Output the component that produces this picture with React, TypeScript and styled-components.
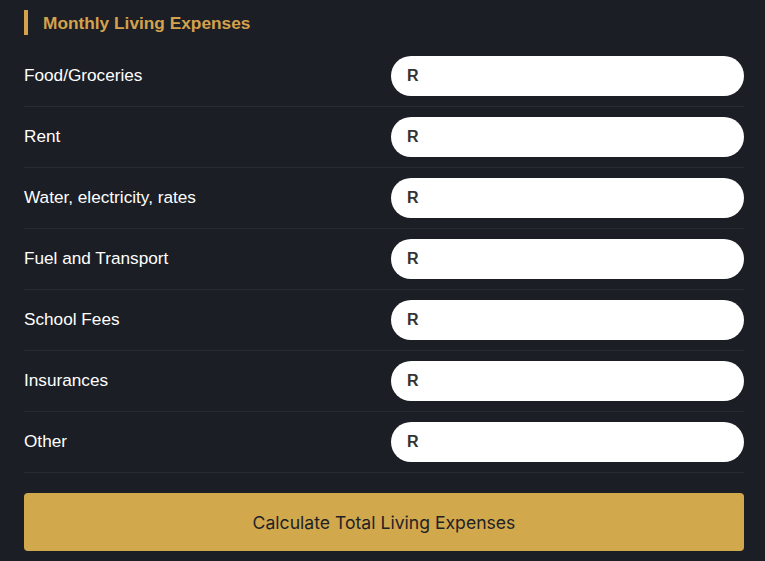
import styled, {createGlobalStyle} from 'styled-components'

const GlobalStyle = createGlobalStyle`
  html, body {
    margin: 0;
    padding: 0;
    background: #1b1e25;
  }
  * {
    box-sizing: border-box;
  }
`

const expenses = [
  'Food/Groceries',
  'Rent',
  'Water, electricity, rates',
  'Fuel and Transport',
  'School Fees',
  'Insurances',
  'Other',
]

function App() {
  return (
    <>
      <GlobalStyle />
      <Page>
        <Heading>Monthly Living Expenses</Heading>
        <List>
          {expenses.map(name => (
            <Row key={name}>
              <Label>{name}</Label>
              <Field>
                <Prefix>R</Prefix>
                <Input type='text' aria-label={name} />
              </Field>
            </Row>
          ))}
        </List>
        <Button type='button'>Calculate Total Living Expenses</Button>
      </Page>
    </>
  )
}

const Page = styled.div`
  min-height: 561px;
  padding: 10px 21px 10px 24px;
  background: #1b1e25;
  font-family: 'Liberation Sans', Arial, sans-serif;
`

const Heading = styled.h2`
  margin: 0 0 11px;
  padding: 3px 0 2px 15px;
  border-left: 4px solid #d4a24c;
  color: #d4a24c;
  font-size: 17.3px;
  font-weight: 700;
  line-height: 20px;
`

const List = styled.div`
  display: flex;
  flex-direction: column;
`

const Row = styled.div`
  display: grid;
  grid-template-columns: 1fr 353px;
  align-items: center;
  padding: 10px 0;
  border-bottom: 1px solid #272b32;
`

const Label = styled.label`
  color: #ffffff;
  font-size: 17.2px;
  margin-top: -1px;
`

const Field = styled.div`
  display: flex;
  align-items: center;
  height: 40px;
  padding: 0 16px;
  background: #ffffff;
  border-radius: 20px;
`

const Prefix = styled.span`
  color: #333333;
  font-size: 16px;
  font-weight: 700;
  margin-right: 6px;
`

const Input = styled.input`
  flex: 1;
  min-width: 0;
  border: none;
  outline: none;
  background: transparent;
  font-family: inherit;
  font-size: 16px;
  color: #333333;
`

const Button = styled.button`
  display: block;
  width: 100%;
  height: 58px;
  margin-top: 20px;
  border: none;
  border-radius: 4px;
  background: #d1a84c;
  color: #1f2126;
  font-family: Inter, 'Noto Sans', sans-serif;
  font-size: 17.6px;
  cursor: pointer;
`

export default App
